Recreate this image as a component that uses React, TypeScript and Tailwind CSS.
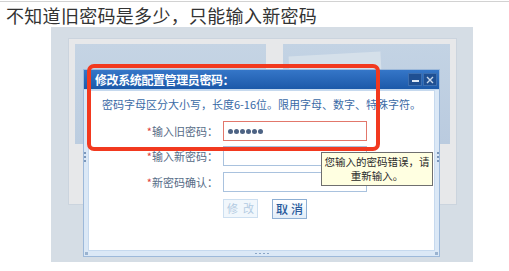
const CJK = { fontFamily: '"Noto Sans CJK SC", "Noto Sans", sans-serif' };

function Dots() {
  return (
    <div className="flex items-center gap-[1px] pl-[4px] h-full">
      {[0, 1, 2, 3, 4, 5].map((i) => (
        <span key={i} className="w-[5px] h-[5px] rounded-full bg-[#4d6384]" />
      ))}
    </div>
  );
}

function Row({ label, error, children }: { label: string; error?: boolean; children?: React.ReactNode }) {
  return (
    <div className="flex items-center">
      <div className="w-[129px] text-right text-[11px] leading-[14px] text-[#566c87] whitespace-nowrap">
        <span className="text-[#e0403a]">*</span>
        {label}
      </div>
      <div
        className={
          "ml-[5px] w-[144px] h-[20px] bg-white border " +
          (error ? "border-[#e2776b]" : "border-[#a9c2de]")
        }
      >
        {children}
      </div>
    </div>
  );
}

function Dialog() {
  return (
    <div className="relative ml-[32px] mt-[42px] w-[357px] h-[188px] flex flex-col border border-[#9db9da] bg-[#dbe8f6]">
      {/* title bar */}
      <div className="h-[19px] flex items-center justify-between bg-gradient-to-b from-[#3576c8] to-[#1b59a9] pl-[11px] pr-[2px]">
        <span className="text-white text-[12px] font-bold leading-none tracking-[-0.4px]">
          修改系统配置管理员密码：
        </span>
        <div className="flex gap-[1px]">
          <div className="w-[14px] h-[13px] bg-[#1f4f92] border border-[#3d6fb0] flex items-center justify-center">
            <span className="w-[7px] h-[2px] bg-[#dfe9f5] mt-[3px]" />
          </div>
          <div className="w-[14px] h-[13px] bg-[#1f4f92] border border-[#3d6fb0] flex items-center justify-center">
            <svg width="8" height="8" viewBox="0 0 8 8">
              <path d="M1 1 L7 7 M7 1 L1 7" stroke="#c9d8ea" strokeWidth="1.4" />
            </svg>
          </div>
        </div>
      </div>
      <div className="h-px bg-[#c2d8ef]" />
      {/* body */}
      <div className="relative flex-1 mx-[4px] mb-[5px] bg-white border border-[#c6d9ee] flex flex-col">
        <p className="text-center text-[11px] leading-[14px] text-[#3a6aa6] mt-[6px] whitespace-nowrap">
          密码字母区分大小写，长度6-16位。限用字母、数字、特殊字符。
        </p>
        <div className="mt-[10px] flex flex-col">
          <Row label="输入旧密码：" error>
            <Dots />
          </Row>
          <div className="h-[5px]" />
          <Row label="输入新密码：" />
          <div className="h-[6px]" />
          <Row label="新密码确认：" />
        </div>
        <div className="mt-[7px] flex pl-[134px] gap-[14px]">
          <div className="w-[35px] h-[19px] border border-[#cddff0] bg-[#f1f7fc] flex items-center justify-center text-[11px] text-[#b3cbe2] whitespace-nowrap tracking-[5px] pl-[5px]">
            修改
          </div>
          <div className="w-[35px] h-[20px] border border-[#8eafd3] bg-gradient-to-b from-white to-[#e2edf8] flex items-center justify-center text-[12px] font-medium text-[#28599a] whitespace-nowrap tracking-[3px] pl-[3px]">
            取消
          </div>
        </div>
      </div>
      {/* side handles */}
      <div className="absolute left-[0px] top-[82px] flex flex-col gap-[2px]">
        {[0, 1, 2].map((i) => (
          <span key={i} className="w-[2px] h-[2px] bg-[#7b97bb]" />
        ))}
      </div>
      <div className="absolute right-[0px] top-[82px] flex flex-col gap-[2px]">
        {[0, 1, 2].map((i) => (
          <span key={i} className="w-[2px] h-[2px] bg-[#7b97bb]" />
        ))}
      </div>
      <div className="absolute bottom-[2px] left-[171px] flex gap-[2px]">
        {[0, 1, 2, 3].map((i) => (
          <span key={i} className="w-[2px] h-[1px] bg-[#8aa5c6]" />
        ))}
      </div>
      <span className="absolute bottom-[1px] left-[1px] w-[3px] h-[3px] bg-[#9ab3d0]" />
      <span className="absolute bottom-[1px] right-[1px] w-[3px] h-[3px] bg-[#9ab3d0]" />
    </div>
  );
}

export default function App() {
  return (
    <div className="w-[509px] h-[271px] bg-white overflow-hidden" style={CJK}>
      <div className="h-px mt-px bg-[#d2d2d2]" />
      <p className="pl-[6px] pt-[2px] text-[18px] leading-[22px] text-[#333333] tracking-[0.3px] whitespace-nowrap">
        不知道旧密码是多少，只能输入新密码
      </p>
      <div className="relative ml-[51px] mt-[1px] w-[422px] h-[235px] bg-[#d5dde5] overflow-hidden">
        {/* background page */}
        <div className="absolute left-[17px] top-[11px] w-[389px] h-[167px] bg-[#e7e8ea] border border-[#cbd4de] flex gap-[17px] px-[6px] pt-[5px]">
          <div className="w-[192px] h-[100px] bg-gradient-to-b from-[#c5d4e4] to-[#bccde0]" />
          <div className="relative w-[168px] h-[100px] bg-gradient-to-b from-[#c3d3e4] to-[#bacbdf]">
            <div className="absolute left-[6px] top-[10px] w-[92px] h-[20px] bg-[#d5e0ea] border-b-2 border-[#a9d19a] -rotate-3" />
          </div>
        </div>
        <Dialog />
        {/* red highlight */}
        <div className="absolute left-[36px] top-[37px] w-[293px] h-[87px] border-[4px] border-[#f2391f] rounded-[7px]" />
        {/* tooltip */}
        <div className="absolute left-[270px] top-[125px] w-[112px] h-[34px] bg-[#ffffe1] border border-[#6f6f6f] flex flex-col items-center justify-center text-[10.5px] leading-[14px] text-[#2a2a2a] whitespace-nowrap">
          <span>您输入的密码错误，请</span>
          <span>重新输入。</span>
        </div>
      </div>
    </div>
  );
}
